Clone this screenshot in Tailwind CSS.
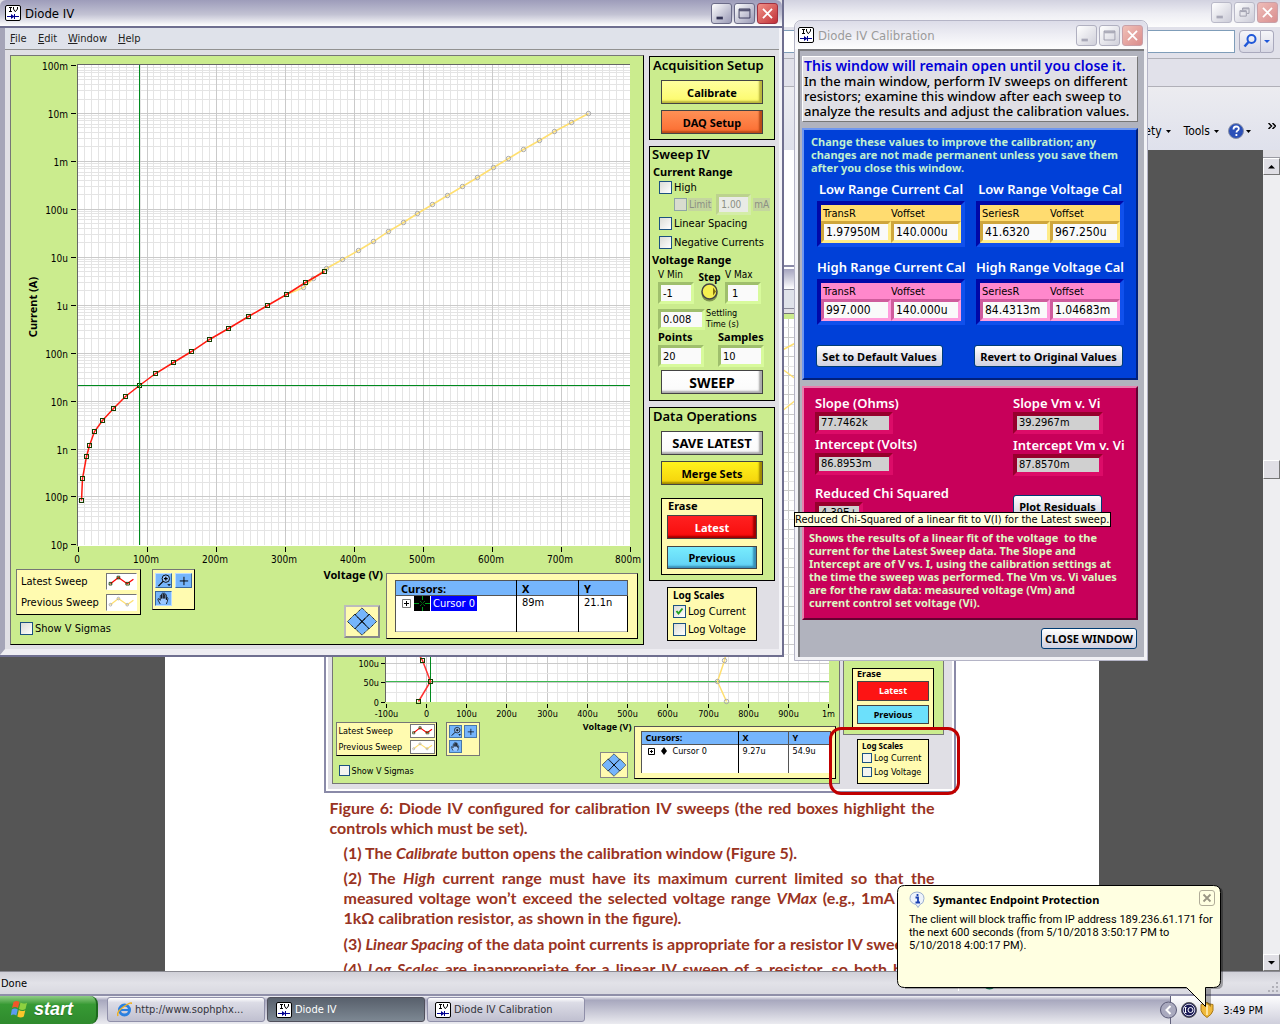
<!DOCTYPE html>
<html lang="en">
<head>
<meta charset="utf-8">
<title>Diode IV</title>
<script src="https://cdn.jsdelivr.net/npm/@tailwindcss/browser@4"></script>
</head>
<body class="relative flex h-screen flex-col overflow-hidden bg-[#555555] font-['DejaVu_Sans_Condensed','Roboto',sans-serif] text-[11px] leading-[13px] text-black">

<svg class="hidden" aria-hidden="true">
  <symbol id="iv" viewBox="0 0 16 16">
    <rect x=".5" y=".5" width="15" height="15" rx="1.5" fill="#fff" stroke="#000"/>
    <path d="M4 2.500h3M5.500 2.500v4M4 6.500h3M8.500 2v2l1.500 2.500h.5L12.500 4V2" fill="none" stroke="#000"/>
    <path d="M2 11.500h12M9.500 9v5" stroke="#000090" fill="none"/><path d="M6 9v5l3.500-2.500z" fill="#000090"/>
  </symbol>
  <symbol id="min" viewBox="0 0 21 21"><path d="M5 14h7v3H5z" fill="currentColor"/></symbol>
  <symbol id="max" viewBox="0 0 21 21"><path d="M4.500 5.500h12v10h-12zM4.500 6.500h12M5 7.500h11" fill="none" stroke="currentColor"/></symbol>
  <symbol id="restore" viewBox="0 0 21 21"><path d="M8.500 8V5.500h7v6H13M8 6.500h7M5.500 8.500h7v6h-7zM6 9.500h6" fill="none" stroke="currentColor"/></symbol>
  <symbol id="x" viewBox="0 0 21 21"><path d="M5.500 5.500l10 10M15.500 5.500l-10 10" fill="none" stroke="currentColor" stroke-width="2"/></symbol>
  <symbol id="zoom" viewBox="0 0 16 14"><circle cx="10.500" cy="5" r="4" fill="#9cc8ff" stroke="#000"/><path d="M8.500 5h4M10.500 3v4M7.500 8l-5 5" stroke="#000" stroke-width="1.300" fill="none"/><path d="M12 11h4l-2 2z"/></symbol>
  <symbol id="plus" viewBox="0 0 16 14"><path d="M4 7.500h9M8.500 3v9" stroke="#000" fill="none"/></symbol>
  <symbol id="hand" viewBox="0 0 16 14"><path d="M4.500 13L2 8.500q-.5-2 1.500-1l1 1.500V4q.8-1.500 1.500 0v3V2q1-1.500 1.700 0v5-5.500q1-1.200 1.700 0V7 3q1-1.200 1.700 0v5.500-2q1.400-1.500 1.600.5-.2 3-1.700 6" fill="#9cc8ff" stroke="#000" stroke-width=".8"/></symbol>
  <symbol id="pad" viewBox="0 0 36 33">
    <g fill="#75b5fc" stroke="#000" stroke-dasharray="1.500 .7"><path d="M10 8l8 8.500-8 8.500-8.500-8.500zM26 8l8.500 8.500-8.500 8.500-8-8.500zM18 1l8 8-8 7.500L10 9zM18 16.500l8 8-8 7.500-8-7.500z"/></g><path d="M15 13.500l6 6M21 13.500l-6 6" stroke="#000"/>
  </symbol>
  <symbol id="redline" viewBox="0 0 31 17"><path d="M3 11l9-7 10 7 7-5" fill="none" stroke="#f00" stroke-width="1.500"/><path d="M1.500 9.500h3v3h-3zM10.500 2.500h3v3h-3zM20.500 9.500h4v3h-4z" fill="none" stroke="#153d00"/></symbol>
  <symbol id="yelline" viewBox="0 0 31 17"><path d="M3 11l9-7 10 7 7-5" fill="none" stroke="#ffdf70" stroke-width="1.500"/><g fill="none" stroke="#aaa"><circle cx="3" cy="11" r="1.500"/><circle cx="12" cy="4" r="1.500"/><circle cx="22" cy="11" r="1.500"/></g></symbol>
</svg>

<!-- Web browser behind the instrument windows -->
<header class="h-[150px] shrink-0 bg-[#e1e1ea]">
  <div class="flex h-[27px] justify-end gap-[2px] bg-linear-to-b from-[#d2d2e0] via-[#ededf3] to-[#fdfdfd] px-[2px] pt-[2px]">
    <button aria-label="Minimize" class="h-[21px] w-[21px] rounded-[3px] border border-[#b9b9c8] bg-linear-to-br from-white to-[#ccccd8] text-[#a9a9b8]"><svg class="size-full"><use href="#min"/></svg></button>
    <button aria-label="Restore" class="h-[21px] w-[21px] rounded-[3px] border border-[#b9b9c8] bg-linear-to-br from-white to-[#ccccd8] text-[#9a9aaa]"><svg class="size-full"><use href="#restore"/></svg></button>
    <button aria-label="Close" class="h-[21px] w-[21px] rounded-[3px] border border-[#c9a0a8] bg-linear-to-br from-[#eebcb8] to-[#d98f90] text-white"><svg class="size-full"><use href="#x"/></svg></button>
  </div>
  <div class="flex h-[32px] items-start justify-end gap-[4px] border-b border-[#b0b0b8] pt-[3px] pr-[6px]">
    <input aria-label="Address" class="h-[23px] flex-1 border border-[#7f9db9] bg-white">
    <div class="flex h-[23px]">
      <button aria-label="Search" class="w-[22px] rounded-l-[4px] border border-[#a9a9bd] bg-linear-to-b from-[#f6f6fa] to-[#d8d8e4]"><svg class="size-full" viewBox="0 0 20 20"><circle cx="11.500" cy="7.500" r="4" fill="none" stroke="#2058d8" stroke-width="2"/><path d="M8.500 10.500L4.500 15" stroke="#2058d8" stroke-width="2.500"/></svg></button>
      <button aria-label="Search options" class="w-[13px] rounded-r-[4px] border border-l-0 border-[#a9a9bd] bg-linear-to-b from-[#f6f6fa] to-[#d8d8e4]"><svg class="size-full" viewBox="0 0 12 20"><path d="M3 8.500h6l-3 3z" fill="#2058d8"/></svg></button>
    </div>
  </div>
  <div class="h-[28px] border-b border-[#b0b0b8]"></div>
  <nav class="flex h-[63px] items-start justify-end bg-linear-to-b from-[#ececf0] to-[#dfe1ec] pt-[36px] text-[12px] leading-[17px]">
    <button class="flex items-center gap-[4px]">Safety<svg class="h-[3px] w-[5px]" viewBox="0 0 5 3"><path d="M0 0h5L2.500 3z"/></svg></button>
    <button class="ml-[13px] flex items-center gap-[4px]">Tools<svg class="h-[3px] w-[5px]" viewBox="0 0 5 3"><path d="M0 0h5L2.500 3z"/></svg></button>
    <button aria-label="Help" class="ml-[9px] flex items-center gap-[2px]"><svg class="size-[16px]" viewBox="0 0 16 16"><circle cx="8" cy="8" r="7.500" fill="#2b50b8" stroke="#8890a8"/><path d="M5.500 6.500q0-3 2.700-3t2.600 2.300q0 1.200-1.400 2-.9.500-.9 1.700M8.400 11v2" fill="none" stroke="#fff" stroke-width="1.800"/></svg><svg class="h-[3px] w-[5px]" viewBox="0 0 5 3"><path d="M0 0h5L2.500 3z"/></svg></button>
    <button class="mr-[4px] ml-[17px]" aria-label="More"><svg class="h-[6px] w-[8px]" viewBox="0 0 8 6"><path d="M.5 0l3 3-3 3M4.500 0l3 3-3 3" fill="none" stroke="#000" stroke-width="1.500"/></svg></button>
  </nav>
</header>

<div class="flex min-h-0 flex-1">
  <main class="min-w-0 flex-1 overflow-hidden">
    <article class="mx-auto h-full w-[934px] bg-white pt-[115px] pl-[159px]">
      <figure class="relative h-[528px] w-[632px] border-2 border-[#8a8aa8]">
        <div class="flex h-full flex-col border-2 border-white">
          <div class="h-[20px] bg-linear-to-b from-[#a5a4bf] to-white"></div>
          <div class="h-[20px] border-y border-[#8a8a9a] bg-[#dfe2ea]"></div>
          <div class="flex min-h-0 flex-1 bg-[#e0dfe5] pt-[4px] pb-[5px] pl-[4px]">
            <div class="flex w-[508px] flex-col border border-[#767676] bg-[#cbec8e]">
              <svg id="miniplot" class="h-[408px] w-full shrink-0" viewBox="332 315 506 408"></svg>
              <div class="flex min-h-0 flex-1 gap-[9px] pl-[3px] text-[9px] leading-[10px]">
                <div>
                  <div class="flex h-[34px] w-[101px] flex-col justify-between border border-r-black border-b-black border-[#767676] bg-[#fffbb0] p-[1px] pl-[2px]">
                    <div class="flex items-center justify-between">Latest Sweep<svg class="h-[14px] w-[25px] border border-[#767676] bg-white"><use href="#redline"/></svg></div>
                    <div class="flex items-center justify-between">Previous Sweep<svg class="h-[14px] w-[25px] border border-[#767676] bg-white"><use href="#yelline"/></svg></div>
                  </div>
                  <label class="mt-[9px] ml-[3px] flex items-center gap-[2px]"><input type="checkbox" class="size-[11px] appearance-none border border-[#1c5180] bg-[#f4f4f0]">Show V Sigmas</label>
                </div>
                <div class="grid h-[34px] w-[34px] grid-cols-2 content-start gap-[2px] border border-[#767676] bg-[#fffbb0] p-[2px]">
                  <button aria-label="Zoom" class="h-[13px] border border-[#4878a8] bg-[#75b5fc]"><svg class="size-full"><use href="#zoom"/></svg></button>
                  <button aria-label="Move cursor" class="h-[13px] border border-[#4878a8] bg-[#75b5fc]"><svg class="size-full"><use href="#plus"/></svg></button>
                  <button aria-label="Pan" class="h-[13px] border border-[#4878a8] bg-[#75b5fc]"><svg class="size-full"><use href="#hand"/></svg></button>
                </div>
                <div class="-mr-[3px] flex flex-1 flex-col items-end">
                  <b class="-mr-[4px] font-['Noto_Sans',sans-serif]">Voltage (V)</b>
                  <button aria-label="Move cursor by point" class="mt-[20px] h-[26px] w-[28px] border border-[#888] bg-[#fffbb0]"><svg class="size-full"><use href="#pad"/></svg></button>
                </div>
                <div class="relative mt-[4px] mr-[3px] h-[53px] w-[202px] border border-r-black border-b-black border-[#555] bg-[#fffbb0] p-[4px] pl-[6px]">
                  <table class="h-[42px] w-full border-collapse bg-white">
                    <thead><tr class="h-[13px] border border-[#555] bg-[#75b5fc] text-left font-['Noto_Sans',sans-serif]"><th class="w-[97px] border-r border-black p-0 pl-[4px]">Cursors:</th><th class="w-[50px] border-r border-[#555] p-0 pl-[4px]">X</th><th class="p-0 pl-[4px]">Y</th></tr></thead>
                    <tbody><tr class="border-x border-[#555] align-top"><td class="border-r border-black p-0 pt-px pl-[6px]"><span class="flex items-center gap-[6px]"><svg class="size-[7px]" viewBox="0 0 7 7"><path d="M.5.5h6v6h-6zM2 3.500h3M3.500 2v3" fill="none" stroke="#000"/></svg><svg class="h-[8px] w-[6px]" viewBox="0 0 6 8"><path d="M3 0l3 4-3 4-3-4z"/></svg>Cursor 0</span></td><td class="border-r border-[#555] p-0 pt-px pl-[4px]">9.27u</td><td class="p-0 pt-px pl-[4px]">54.9u</td></tr></tbody>
                  </table>
                </div>
              </div>
            </div>
            <div class="ml-[3px] flex w-[101px] flex-col items-center font-['Noto_Sans',sans-serif] text-[9px] leading-[10px]">
              <div class="flex w-full min-h-0 flex-1 flex-col items-center justify-end border border-[#767676] bg-[#cbec8e] pb-[4px]">
                <div class="h-[62px] w-[82px] border border-black bg-[#fffbb0] px-[4px]">
                  <b>Erase</b>
                  <button class="mt-[2px] h-[20px] w-full border border-[#444] bg-[#fd1414] font-bold text-white">Latest</button>
                  <button class="mt-[4px] h-[19px] w-full border border-[#444] bg-[#6ce0fb] font-bold">Previous</button>
                </div>
              </div>
              <div class="mt-[4px] h-[45px] w-[72px] border border-black bg-[#fffbb0] pt-px pl-[4px] font-['DejaVu_Sans_Condensed','Roboto',sans-serif]">
                <b class="font-['Noto_Sans',sans-serif] text-[8px]">Log Scales</b>
                <label class="mt-[2px] flex items-center gap-[2px]"><input type="checkbox" class="size-[10px] appearance-none border border-[#1c5180] bg-[#f4f4f0]">Log Current</label>
                <label class="mt-[4px] flex items-center gap-[2px]"><input type="checkbox" class="size-[10px] appearance-none border border-[#1c5180] bg-[#f4f4f0]">Log Voltage</label>
              </div>
            </div>
          </div>
        </div>
        <div class="absolute -right-[6px] -bottom-[4px] h-[68px] w-[131px] rounded-[12px] border-[3px] border-[#c00000]"></div>
      </figure>
      <div class="ml-[6px] w-[605px] font-['Lato',sans-serif] text-[16px] leading-[20px] font-bold whitespace-nowrap text-[#993322]">
        <figcaption class="mt-[5px]"><div class="[text-align-last:justify]">Figure 6: Diode IV configured for calibration IV sweeps (the red boxes highlight the</div>controls which must be set).</figcaption>
        <p class="mt-[5px] ml-[14px]">(1) The <i>Calibrate</i> button opens the calibration window (Figure 5).</p>
        <p class="mt-[5px] ml-[14px]"><span class="block [text-align-last:justify]">(2) The <i>High</i> current range must have its maximum current limited so that the</span><span class="block [text-align-last:justify]">measured voltage won’t exceed the selected voltage range <i>VMax</i> (e.g., 1mA for a</span>1kΩ calibration resistor, as shown in the figure).</p>
        <p class="mt-[6px] ml-[14px]">(3) <i>Linear Spacing</i> of the data point currents is appropriate for a resistor IV sweep.</p>
        <p class="mt-[5px] ml-[14px] [text-align-last:justify]">(4) <i>Log Scales</i> are inappropriate for a linear IV sweep of a resistor, so both boxes</p>
      </div>
    </article>
  </main>
  <div class="flex w-[17px] flex-col bg-[#eeeef1]">
    <div class="h-[8px] border-b border-[#9a9aa2] bg-[#e0dfe5]"></div>
    <button aria-label="Scroll up" class="h-[17px] border border-t-white border-r-[#777] border-b-[#777] border-l-white bg-[#e0dfe5]"><svg class="size-full" viewBox="0 0 15 15"><path d="M4 9.500h7L7.500 6z"/></svg></button>
    <div class="flex-1 pt-[285px]"><div class="h-[19px] border border-t-white border-r-[#777] border-b-[#777] border-l-white bg-[#e0dfe5]"></div></div>
    <button aria-label="Scroll down" class="h-[17px] border border-t-white border-r-[#777] border-b-[#777] border-l-white bg-[#e0dfe5]"><svg class="size-full" viewBox="0 0 15 15"><path d="M4 6h7L7.500 9.500z"/></svg></button>
  </div>
</div>

<footer class="flex h-[23px] shrink-0 items-center border-t border-[#8a8a92] bg-linear-to-b from-[#d0d0d8] via-[#e2e2e8] to-[#d8d8e0] pl-[1px]"><span>Done</span>
  <span class="ml-auto flex gap-[23px] pr-[270px]"><i class="h-[16px] w-px bg-white"></i><svg class="size-[15px]" viewBox="0 0 15 15"><circle cx="7.500" cy="7.500" r="7" fill="#1b7a5a"/></svg></span>
  <svg class="size-[13px] self-end" viewBox="0 0 13 13"><path d="M9 1h2v2H9zM9 5h2v2H9zM9 9h2v2H9zM5 5h2v2H5zM5 9h2v2H5zM1 9h2v2H1z" fill="#b0b0b8"/></svg>
</footer>

<div class="flex h-[30px] shrink-0 border-t-2 border-[#8f8fa9] bg-linear-to-b from-[#f4f4f8] via-[#a8a8be] via-15% to-[#ebebf0]">
  <button class="flex w-[98px] items-center gap-[4px] rounded-r-[8px] border-r-2 border-[#1d6a1d] bg-linear-to-b from-[#8fce85] via-[#379a34] via-30% to-[#2f8a2d] pb-[2px] pl-[10px] font-['Liberation_Sans',sans-serif] text-[18px] leading-[20px] font-bold text-white italic text-shadow-xs">
    <svg class="h-[18px] w-[20px]" viewBox="0 0 19 18"><path d="M3 2q3-2 6 0L7.500 8q-3-2-6 0z" fill="#f1562a"/><path d="M10 2.500q3 2 6.500.2L15 9q-3 2-6.500 0z" fill="#8ed040"/><path d="M1.300 9.500q3-2 6 0L5.800 15.500q-3-2-5.500 0z" fill="#5b9cf0"/><path d="M8.300 10q3 2 6.500.2L13.300 16.500q-3 2-6.500 0z" fill="#fbc62c"/></svg>start</button>
  <div class="flex flex-1 gap-[2px] pt-px pl-[9px] text-[#33333b]">
    <button class="flex h-[25px] w-[158px] items-center gap-[3px] rounded-[3px] border border-[#8f8fa9] bg-linear-to-b from-white via-[#dcdce6] via-20% to-[#c0c0d0] pl-[9px]">
      <svg class="size-[15px]" viewBox="0 0 15 15"><circle cx="7.500" cy="8" r="5" fill="none" stroke="#2a80e0" stroke-width="3"/><path d="M4 8h9" stroke="#2a80e0" stroke-width="2"/><path d="M1 14Q-1 10 7 4.500T14.500 2" fill="none" stroke="#f0b020" stroke-width="1.500"/></svg>http://www.sophphx...</button>
    <button class="flex h-[25px] w-[158px] items-center gap-[3px] rounded-[3px] border border-[#50505c] bg-linear-to-b from-[#58606c] to-[#7d8893] pl-[8px] text-white"><svg class="size-[16px]"><use href="#iv"/></svg>Diode IV</button>
    <button class="flex h-[25px] w-[158px] items-center gap-[3px] rounded-[3px] border border-[#8f8fa9] bg-linear-to-b from-white via-[#dcdce6] via-20% to-[#c0c0d0] pl-[7px]"><svg class="size-[16px]"><use href="#iv"/></svg>Diode IV Calibration</button>
  </div>
  <div class="flex w-[110px] items-center border-l border-[#62627c] bg-linear-to-b from-[#fdfdfe] to-[#cfcfdc]">
    <svg class="-ml-[12px] h-[22px] w-[40px] shrink-0" viewBox="0 0 40 22"><circle cx="9.500" cy="11" r="8" fill="#a9a9be" stroke="#5c5c78"/><path d="M11.500 7L7.500 11l4 4" fill="none" stroke="#fff" stroke-width="2"/><circle cx="30" cy="11" r="7.500" fill="#1a1a58" stroke="#555"/><circle cx="30" cy="11" r="5.800" fill="none" stroke="#fff" stroke-width=".8"/><path d="M26.500 8.500v5M25.500 8.500h2M25.500 13.500h2" stroke="#fff" fill="none"/><circle cx="31.500" cy="11" r="2.500" fill="none" stroke="#fff"/></svg>
    <svg class="ml-px h-[16px] w-[14px] shrink-0" viewBox="0 0 14 16"><path d="M1 2.500Q4.500 2.500 7 .5q2.500 2 6 2v6q-1 4-6 7-5-3-6-7z" fill="#f0b93a" stroke="#a87818"/><path d="M7 3v10" stroke="#fff2c0" stroke-width="1.500"/></svg>
    <time class="ml-auto pr-[17px]">3:49 PM</time>
  </div>
</div>

<!-- Diode IV main window -->
<section aria-label="Diode IV" class="absolute top-0 left-0 flex h-[657px] w-[784px] flex-col border-r-2 border-b-2 border-[#6f6f90] bg-[#e0dfe5]">
  <div class="flex h-[28px] shrink-0 items-center rounded-t-[6px] border-b-2 border-[#6e6e8f] bg-linear-to-b from-[#9d9cba] via-[#c2c2d3] via-55% to-[#ffffff] pr-[4px] pl-[5px]">
    <svg class="size-[16px]"><use href="#iv"/></svg><h1 class="ml-[4px] text-[13px]">Diode IV</h1>
    <div class="ml-auto flex gap-[2px]">
      <button aria-label="Minimize" class="size-[21px] rounded-[3px] border border-[#6b6b88] bg-linear-to-br from-white to-[#9999b5] text-[#333355]"><svg class="size-full"><use href="#min"/></svg></button>
      <button aria-label="Maximize" class="size-[21px] rounded-[3px] border border-[#6b6b88] bg-linear-to-br from-white to-[#9999b5] text-[#333355]"><svg class="size-full"><use href="#max"/></svg></button>
      <button aria-label="Close" class="size-[21px] rounded-[3px] border border-[#a03040] bg-linear-to-br from-[#f09088] to-[#c02c38] text-white"><svg class="size-full"><use href="#x"/></svg></button>
    </div>
  </div>
  <div class="flex min-h-0 flex-1 flex-col border-r-[3px] border-b-[6px] border-l-[5px] border-r-[#f4f4f8] border-b-[#eeedf2] border-l-[#a5a5b8]">
    <nav class="flex h-[22px] shrink-0 items-center gap-[12px] border-b border-[#919191] bg-[#dfe2ea] pl-[5px] text-[#222]">
      <a href="#file" class="w-[16px]"><u>F</u>ile</a><a href="#edit" class="w-[18px]"><u>E</u>dit</a><a href="#window" class="w-[38px]"><u>W</u>indow</a><a href="#help"><u>H</u>elp</a>
    </nav>
    <div class="flex min-h-0 flex-1 gap-[5px] pt-[5px] pl-[5px]">
      <div class="flex h-[590px] w-[634px] flex-col border border-t-[#767676] border-r-black border-b-black border-l-[#767676] bg-[#cbec8e]">
        <svg id="plot" class="h-[512px] w-full shrink-0" viewBox="11 56 632 512"></svg>
        <div class="flex min-h-0 flex-1 pl-[5px]">
          <div>
            <div class="mt-px flex h-[46px] w-[125px] flex-col justify-between border border-r-black border-b-black border-[#767676] bg-[#fffbb0] p-[3px] pl-[4px]">
              <div class="flex items-center justify-between">Latest Sweep<svg class="h-[17px] w-[31px] border border-t-[#767676] border-l-[#767676] border-white bg-white"><use href="#redline"/></svg></div>
              <div class="flex items-center justify-between">Previous Sweep<svg class="h-[17px] w-[31px] border border-t-[#767676] border-l-[#767676] border-white bg-white"><use href="#yelline"/></svg></div>
            </div>
            <label class="mt-[7px] ml-[4px] flex items-center gap-[2px]"><input type="checkbox" class="size-[13px] appearance-none border border-[#1c5180] bg-linear-to-br from-[#dcdcd7] to-white">Show V Sigmas</label>
          </div>
          <div class="mt-px ml-[11px] grid h-[41px] w-[43px] grid-cols-2 content-start gap-[3px] border border-r-black border-b-black border-[#767676] bg-[#fffbb0] p-[2px] pt-[3px]">
            <button aria-label="Zoom" class="h-[15px] border border-t-[#bcdcff] border-r-[#38689c] border-b-[#38689c] border-l-[#bcdcff] bg-[#75b5fc]"><svg class="size-full"><use href="#zoom"/></svg></button>
            <button aria-label="Move cursor" class="h-[15px] border border-t-[#bcdcff] border-r-[#38689c] border-b-[#38689c] border-l-[#bcdcff] bg-[#75b5fc]"><svg class="size-full"><use href="#plus"/></svg></button>
            <button aria-label="Pan" class="h-[15px] border border-t-[#38689c] border-r-[#bcdcff] border-b-[#bcdcff] border-l-[#38689c] bg-[#75b5fc]"><svg class="size-full"><use href="#hand"/></svg></button>
          </div>
          <div class="mr-[3px] flex flex-1 flex-col items-end">
            <b class="font-['Noto_Sans',sans-serif]">Voltage (V)</b>
            <button aria-label="Move cursor by point" class="mt-[24px] mr-[3px] h-[33px] w-[36px] border-2 border-t-[#bbb] border-r-[#888] border-b-[#888] border-l-[#bbb] bg-[#fffbb0]"><svg class="size-full"><use href="#pad"/></svg></button>
          </div>
          <div class="mt-[5px] mr-[5px] h-[66px] w-[252px] border border-r-black border-b-black border-[#767676] bg-[#fffbb0] pt-[6px] pr-[9px] pl-[8px]">
            <table class="h-[52px] w-full border-collapse border-b border-[#bbb] bg-white">
              <thead><tr class="h-[15px] border border-[#555] bg-[#75b5fc] text-left font-['Noto_Sans',sans-serif]"><th class="w-[121px] border-r border-black p-0 pl-[5px]">Cursors:</th><th class="w-[62px] border-r border-black p-0 pl-[5px]">X</th><th class="p-0 pl-[5px]">Y</th></tr></thead>
              <tbody><tr class="border-r border-l border-r-black border-l-[#555] align-top"><td class="border-r border-black p-0 pl-[6px]"><span class="flex h-[15px] items-center"><svg class="size-[9px]" viewBox="0 0 9 9"><path d="M.5.5h8v8h-8z" fill="#fff" stroke="#777"/><path d="M2 4.500h5M4.500 2v5" stroke="#000"/></svg><svg class="ml-[3px] h-[15px] w-[16px] bg-black" viewBox="0 0 16 15"><path d="M0 7.500h5M11 7.500h5M8.500 0v4M8.500 11v4" stroke="#00a01e"/><path d="M6 5l5 5M11 5l-5 5" stroke="#00a01e" stroke-dasharray="1 1"/></svg><span class="ml-[1px] bg-[#0000ff] px-[2px] leading-[15px] text-white">Cursor 0</span></span></td><td class="border-r border-black p-0 pl-[5px]">89m</td><td class="p-0 pl-[5px]">21.1n</td></tr></tbody>
            </table>
          </div>
        </div>
      </div>

      <div class="flex w-[126px] flex-col items-center gap-[6px] pt-px">
        <div class="flex h-[84px] w-full flex-col items-center border border-black bg-[#cbec8e]">
          <h2 class="h-[23px] w-full pt-[2px] pl-[3px] font-['Noto_Sans',sans-serif] text-[13px] font-semibold whitespace-nowrap">Acquisition Setup</h2>
          <button class="h-[24px] w-[102px] border border-[#444] bg-linear-to-b from-[#ffff9c] to-[#fcfa68] font-['Noto_Sans',sans-serif] font-bold inset-shadow-[-3px_-2px_2px_#b9b53c]">Calibrate</button>
          <button class="mt-[6px] h-[24px] w-[102px] border border-[#444] bg-linear-to-b from-[#ff9055] to-[#fb6c30] font-['Noto_Sans',sans-serif] font-bold inset-shadow-[-3px_-2px_2px_#b94a18]">DAQ Setup</button>
        </div>
        <div class="flex h-[255px] w-full flex-col border border-black bg-[#cbec8e]">
          <h2 class="h-[17px] pt-[1px] pl-[2px] font-['Noto_Sans',sans-serif] text-[13px] font-semibold">Sweep IV</h2>
          <h3 class="h-[16px] pt-[1px] pl-[3px] font-['Noto_Sans',sans-serif] font-bold">Current Range</h3>
          <label class="flex h-[14px] items-center gap-[2px] pl-[9px]"><input type="checkbox" class="size-[13px] appearance-none border border-[#1c5180] bg-linear-to-br from-[#dcdcd7] to-white">High</label>
          <div class="flex h-[21px] items-center pl-[24px] text-[10px] text-[#8b8f84]">
            <label class="flex items-center gap-[1px]"><input type="checkbox" disabled class="size-[13px] appearance-none border border-[#8fa5a5] bg-[#d9dccf]"><span class="bg-[#c4d69f] px-px">Limit</span></label>
            <input disabled aria-label="Current limit" value="1.00" class="ml-[4px] h-[21px] w-[35px] border-[3px] border-t-[#bcd28e] border-r-[#d4eda8] border-b-[#d4eda8] border-l-[#bcd28e] bg-[#e9ebe6] pl-[2px]"><span class="ml-[2px] bg-[#c4d69f] px-px">mA</span>
          </div>
          <label class="flex h-[17px] items-center gap-[2px] pl-[9px]"><input type="checkbox" class="size-[13px] appearance-none border border-[#1c5180] bg-linear-to-br from-[#dcdcd7] to-white">Linear Spacing</label>
          <label class="flex h-[20px] items-center gap-[2px] pl-[9px]"><input type="checkbox" class="size-[13px] appearance-none border border-[#1c5180] bg-linear-to-br from-[#dcdcd7] to-white">Negative Currents</label>
          <h3 class="h-[16px] pt-[1px] pl-[2px] font-['Noto_Sans',sans-serif] font-bold">Voltage Range</h3>
          <div class="flex h-[36px] pl-[8px] text-[10px]">
            <label class="w-[36px]">V Min<input value="-1" class="mt-px block h-[22px] w-full border-[3px] border-t-[#9fbf6c] border-r-[#d8fa9c] border-b-[#d8fa9c] border-l-[#9fbf6c] bg-[#fafafa] pl-[2px] text-[11px]"></label>
            <button class="flex w-[31px] flex-col items-center pt-[3px] font-['Noto_Sans',sans-serif] leading-[12px] font-bold">Step<svg class="size-[19px]" viewBox="0 0 19 19"><circle cx="9.500" cy="10.500" r="8" fill="#7f9650"/><circle cx="9.500" cy="8.500" r="7.500" fill="#f6f050" stroke="#444" stroke-width="1.500"/><path d="M13 4.500v8l3-4z" fill="#807010"/></svg></button>
            <label class="w-[36px] whitespace-nowrap">V Max<input value="1" class="mt-px block h-[22px] w-full border-[3px] border-t-[#9fbf6c] border-r-[#d8fa9c] border-b-[#d8fa9c] border-l-[#9fbf6c] bg-[#fafafa] pl-[4px] text-[11px]"></label>
          </div>
          <label class="flex h-[26px] items-end gap-[1px] pl-[8px] text-[9px] leading-[11px]"><input value="0.008" class="h-[21px] w-[47px] border-[3px] border-t-[#9fbf6c] border-r-[#d8fa9c] border-b-[#d8fa9c] border-l-[#9fbf6c] bg-[#fafafa] pl-[2px] text-[11px]"><span>Settling<br>Time (s)</span></label>
          <div class="mr-[2px] flex justify-between pl-[8px] font-['Noto_Sans',sans-serif]">
            <label class="w-[46px] font-bold">Points<input value="20" class="mt-[2px] block h-[22px] w-full border-[3px] border-t-[#9fbf6c] border-r-[#d8fa9c] border-b-[#d8fa9c] border-l-[#9fbf6c] bg-[#fafafa] pl-[2px] font-['DejaVu_Sans_Condensed','Roboto',sans-serif] font-normal"></label>
            <label class="w-[54px] font-bold">Samples<input value="10" class="mt-[2px] block h-[22px] w-[46px] border-[3px] border-t-[#9fbf6c] border-r-[#d8fa9c] border-b-[#d8fa9c] border-l-[#9fbf6c] bg-[#fafafa] pl-[2px] font-['DejaVu_Sans_Condensed','Roboto',sans-serif] font-normal"></label>
          </div>
          <button class="mt-[3px] h-[24px] w-[102px] self-center border border-[#444] bg-linear-to-b from-white to-[#fafafa] font-['Noto_Sans',sans-serif] text-[14px] font-bold inset-shadow-[-3px_-2px_2px_#aaaaaa]">SWEEP</button>
        </div>
        <div class="flex h-[174px] w-full flex-col items-center border border-black bg-[#cbec8e]">
          <h2 class="h-[23px] w-full pt-[2px] pl-[3px] font-['Noto_Sans',sans-serif] text-[13px] font-semibold">Data Operations</h2>
          <button class="h-[24px] w-[102px] border border-[#444] bg-linear-to-b from-white to-[#fafafa] font-['Noto_Sans',sans-serif] text-[13px] font-bold inset-shadow-[-3px_-2px_2px_#aaaaaa]">SAVE LATEST</button>
          <button class="mt-[6px] h-[24px] w-[102px] border border-[#444] bg-linear-to-b from-[#fff21c] to-[#f4d20a] font-['Noto_Sans',sans-serif] font-bold inset-shadow-[-3px_-2px_2px_#a08a00]">Merge Sets</button>
          <div class="mt-[13px] h-[77px] w-[102px] border border-black bg-[#fffbb0] px-[5px] font-['Noto_Sans',sans-serif] font-bold">
            <h3 class="h-[16px] pl-[1px]">Erase</h3>
            <button class="block h-[24px] w-full border border-[#444] bg-linear-to-b from-[#ff2020] to-[#f80808] text-white inset-shadow-[-3px_-2px_2px_#a00000]">Latest</button>
            <button class="mt-[7px] block h-[23px] w-full border border-[#444] bg-linear-to-b from-[#78ecfd] to-[#60d0f4] inset-shadow-[-3px_-2px_2px_#3890b8]">Previous</button>
          </div>
        </div>
        <div class="h-[54px] w-[90px] border border-black bg-[#fffbb0] pl-[5px]">
          <h3 class="h-[16px] pt-px font-['Noto_Sans',sans-serif] text-[10px] font-bold">Log Scales</h3>
          <label class="flex h-[15px] items-center gap-[2px]"><span class="grid size-[13px]"><input type="checkbox" checked class="col-start-1 row-start-1 size-[13px] appearance-none border border-[#1c5180] bg-linear-to-br from-[#dcdcd7] to-white"><svg class="pointer-events-none col-start-1 row-start-1" viewBox="0 0 13 13"><path d="M3.500 6l2 2.500 4-5" fill="none" stroke="#21a121" stroke-width="2"/></svg></span>Log Current</label>
          <label class="mt-[2px] flex h-[17px] items-center gap-[2px]"><input type="checkbox" class="size-[13px] appearance-none border border-[#1c5180] bg-linear-to-br from-[#dcdcd7] to-white">Log Voltage</label>
        </div>
      </div>
    </div>
  </div>
</section>

<!-- Calibration window -->
<section aria-label="Diode IV Calibration" class="absolute top-[20px] left-[794px] flex h-[641px] w-[354px] flex-col rounded-t-[7px] border border-[#b4b4c6] bg-[#f2f2f6]">
  <div class="flex h-[28px] shrink-0 items-center rounded-t-[7px] bg-linear-to-b from-[#dcdce8] via-[#eeeef4] to-[#fdfdfd] pr-[4px] pl-[3px]">
    <svg class="size-[16px]"><use href="#iv"/></svg><h1 class="ml-[4px] text-[13px] text-[#9b9b9b]">Diode IV Calibration</h1>
    <div class="ml-auto flex gap-[2px]">
      <button aria-label="Minimize" class="size-[21px] rounded-[3px] border border-[#b0b0c0] bg-linear-to-br from-white to-[#d0d0da] text-[#a9a9b8]"><svg class="size-full"><use href="#min"/></svg></button>
      <button aria-label="Maximize" class="size-[21px] rounded-[3px] border border-[#b0b0c0] bg-linear-to-br from-white to-[#d0d0da] text-[#9a9aaa]"><svg class="size-full"><use href="#max"/></svg></button>
      <button aria-label="Close" class="size-[21px] rounded-[3px] border border-[#c9a0a8] bg-linear-to-br from-[#f0c0b8] to-[#da8c8c] text-white"><svg class="size-full"><use href="#x"/></svg></button>
    </div>
  </div>
  <div class="mx-[3px] mb-[3px] flex min-h-0 flex-1 flex-col border-t-2 border-l-2 border-[#7c7c80] bg-[#b1b3be] px-[2px] pt-[5px] font-['Noto_Sans',sans-serif] font-bold">
    <div class="h-[66px] w-[336px] border border-t-white border-r-[#777] border-b-[#777] border-l-white bg-[#e0dfe5] pt-[1px] pl-[1px] text-[13px] leading-[15px] font-medium whitespace-nowrap">
      <h2 class="text-[14px] leading-[16px] font-semibold text-[#0000d8]">This window will remain open until you close it.</h2>
      <p>In the main window, perform IV sweeps on different<br>resistors; examine this window after each sweep to<br>analyze the results and adjust the calibration values.</p>
    </div>
    <div class="mt-[6px] h-[252px] w-[336px] border-2 border-t-[#6f97f0] border-r-[#00207c] border-b-[#00207c] border-l-[#6f97f0] bg-[#0040d8] pt-[5px] pl-[7px] text-white">
      <p class="whitespace-nowrap text-[#c0f0d0]">Change these values to improve the calibration; any<br>changes are not made permanent unless you save them<br>after you close this window.</p>
      <div class="mt-[9px] ml-[6px] grid w-[307px] grid-cols-2 gap-x-[11px] gap-y-[14px] text-center">
        <section><h3 class="h-[18px] text-[13px] font-semibold whitespace-nowrap">Low Range Current Cal</h3>
          <div class="grid h-[46px] grid-cols-2 border-4 border-t-[#0008a8] border-r-[#1050ec] border-b-[#1050ec] border-l-[#0008a8] bg-[#ffdc70] text-left font-['DejaVu_Sans_Condensed','Roboto',sans-serif] font-normal text-black">
            <label class="pt-[2px]"><span class="pl-[2px]">TransR</span><input value="1.97950M" class="mt-[1px] block h-[22px] w-full border-[3px] border-t-[#cfa63c] border-r-[#ffec88] border-b-[#ffec88] border-l-[#cfa63c] bg-[#fafafa] pl-[2px] text-[12px]"></label>
            <label class="pt-[2px]">Voffset<input value="140.000u" class="mt-[1px] block h-[22px] w-full border-[3px] border-t-[#cfa63c] border-r-[#ffec88] border-b-[#ffec88] border-l-[#cfa63c] bg-[#fafafa] pl-[2px] text-[12px]"></label>
          </div></section>
        <section><h3 class="h-[18px] text-[13px] font-semibold whitespace-nowrap">Low Range Voltage Cal</h3>
          <div class="grid h-[46px] grid-cols-2 border-4 border-t-[#0008a8] border-r-[#1050ec] border-b-[#1050ec] border-l-[#0008a8] bg-[#ffdc70] text-left font-['DejaVu_Sans_Condensed','Roboto',sans-serif] font-normal text-black">
            <label class="pt-[2px]"><span class="pl-[2px]">SeriesR</span><input value="41.6320" class="mt-[1px] block h-[22px] w-full border-[3px] border-t-[#cfa63c] border-r-[#ffec88] border-b-[#ffec88] border-l-[#cfa63c] bg-[#fafafa] pl-[2px] text-[12px]"></label>
            <label class="pt-[2px]">Voffset<input value="967.250u" class="mt-[1px] block h-[22px] w-full border-[3px] border-t-[#cfa63c] border-r-[#ffec88] border-b-[#ffec88] border-l-[#cfa63c] bg-[#fafafa] pl-[2px] text-[12px]"></label>
          </div></section>
        <section><h3 class="h-[18px] text-[13px] font-semibold whitespace-nowrap">High Range Current Cal</h3>
          <div class="grid h-[46px] grid-cols-2 border-4 border-t-[#0008a8] border-r-[#1050ec] border-b-[#1050ec] border-l-[#0008a8] bg-[#ff88cc] text-left font-['DejaVu_Sans_Condensed','Roboto',sans-serif] font-normal text-black">
            <label class="pt-[2px]"><span class="pl-[2px]">TransR</span><input value="997.000" class="mt-[1px] block h-[22px] w-full border-[3px] border-t-[#cf5c9c] border-r-[#ff9cdc] border-b-[#ff9cdc] border-l-[#cf5c9c] bg-[#fafafa] pl-[2px] text-[12px]"></label>
            <label class="pt-[2px]">Voffset<input value="140.000u" class="mt-[1px] block h-[22px] w-full border-[3px] border-t-[#cf5c9c] border-r-[#ff9cdc] border-b-[#ff9cdc] border-l-[#cf5c9c] bg-[#fafafa] pl-[2px] text-[12px]"></label>
          </div></section>
        <section><h3 class="h-[18px] text-[13px] font-semibold whitespace-nowrap">High Range Voltage Cal</h3>
          <div class="grid h-[46px] grid-cols-2 border-4 border-t-[#0008a8] border-r-[#1050ec] border-b-[#1050ec] border-l-[#0008a8] bg-[#ff88cc] text-left font-['DejaVu_Sans_Condensed','Roboto',sans-serif] font-normal text-black">
            <label class="pt-[2px]"><span class="pl-[2px]">SeriesR</span><input value="84.4313m" class="mt-[1px] block h-[22px] w-full border-[3px] border-t-[#cf5c9c] border-r-[#ff9cdc] border-b-[#ff9cdc] border-l-[#cf5c9c] bg-[#fafafa] pl-[2px] text-[12px]"></label>
            <label class="pt-[2px]">Voffset<input value="1.04683m" class="mt-[1px] block h-[22px] w-full border-[3px] border-t-[#cf5c9c] border-r-[#ff9cdc] border-b-[#ff9cdc] border-l-[#cf5c9c] bg-[#fafafa] pl-[2px] text-[12px]"></label>
          </div></section>
      </div>
      <div class="mt-[20px] ml-[5px] flex w-[307px] justify-between text-black">
        <button class="h-[22px] w-[127px] rounded-[3px] border border-[#003c74] bg-linear-to-b from-white to-[#d0d0e0] whitespace-nowrap">Set to Default Values</button>
        <button class="h-[22px] w-[149px] rounded-[3px] border border-[#003c74] bg-linear-to-b from-white to-[#d0d0e0] whitespace-nowrap">Revert to Original Values</button>
      </div>
    </div>
    <div class="mt-[6px] h-[234px] w-[336px] border-2 border-t-[#e87fae] border-r-[#640030] border-b-[#640030] border-l-[#e87fae] bg-[#c8005a] pt-[9px] text-white">
      <div class="grid h-[132px] grid-cols-[198px_1fr] pl-[11px] text-[13px] font-semibold">
        <div>
          <label class="block h-[41px]">Slope (Ohms)<output class="mt-[2px] block h-[22px] w-[78px] border-4 border-t-[#96002c] border-r-[#dc0c68] border-b-[#dc0c68] border-l-[#96002c] bg-[#d0d0d0] pl-[2px] font-['DejaVu_Sans_Condensed','Roboto',sans-serif] text-[11px] font-normal text-black">77.7462k</output></label>
          <label class="block h-[49px]">Intercept (Volts)<output class="mt-[2px] block h-[22px] w-[78px] border-4 border-t-[#96002c] border-r-[#dc0c68] border-b-[#dc0c68] border-l-[#96002c] bg-[#d0d0d0] pl-[2px] font-['DejaVu_Sans_Condensed','Roboto',sans-serif] text-[11px] font-normal text-black">86.8953m</output></label>
          <label class="block">Reduced Chi Squared<output class="mt-[2px] block h-[22px] w-[48px] border-4 border-t-[#96002c] border-r-[#dc0c68] border-b-[#dc0c68] border-l-[#96002c] bg-[#d0d0d0] pl-[2px] font-['DejaVu_Sans_Condensed','Roboto',sans-serif] text-[11px] font-normal text-black">4.39E+</output></label>
        </div>
        <div>
          <label class="block h-[42px]">Slope Vm v. Vi<output class="mt-[2px] block h-[22px] w-[90px] border-4 border-t-[#96002c] border-r-[#dc0c68] border-b-[#dc0c68] border-l-[#96002c] bg-[#d0d0d0] pl-[2px] font-['DejaVu_Sans_Condensed','Roboto',sans-serif] text-[11px] font-normal text-black">39.2967m</output></label>
          <label class="block h-[56px] whitespace-nowrap">Intercept Vm v. Vi<output class="mt-[2px] block h-[22px] w-[90px] border-4 border-t-[#96002c] border-r-[#dc0c68] border-b-[#dc0c68] border-l-[#96002c] bg-[#d0d0d0] pl-[2px] font-['DejaVu_Sans_Condensed','Roboto',sans-serif] text-[11px] font-normal text-black">87.8570m</output></label>
          <button class="block h-[22px] w-[89px] rounded-[3px] border border-[#003c74] bg-linear-to-b from-white to-[#d0d0e0] text-[11px] font-bold whitespace-nowrap text-black">Plot Residuals</button>
        </div>
      </div>
      <p class="mt-[2px] pl-[5px] whitespace-pre text-[#dcf8c4]">Shows the results of a linear fit of the voltage  to the
current for the Latest Sweep data. The Slope and
Intercept are of V vs. I, using the calibration settings at
the time the sweep was performed. The Vm vs. Vi values
are for the raw data: measured voltage (Vm) and
current control set voltage (Vi).</p>
    </div>
    <button class="mt-[8px] mr-[5px] h-[21px] w-[96px] self-end rounded-[3px] border border-[#003c74] bg-linear-to-b from-white to-[#d0d0e0] whitespace-nowrap">CLOSE WINDOW</button>
  </div>
</section>
<div role="tooltip" class="absolute top-[512px] left-[794px] h-[15px] w-[317px] border border-black bg-[#ffffe1] whitespace-nowrap">Reduced Chi-Squared of a linear fit to V(I) for the Latest sweep.</div>

<!-- Notification balloon -->
<aside role="status" class="absolute right-[57px] bottom-[17px] h-[124px] w-[326px]">
  <svg class="absolute inset-0 size-full" viewBox="0 0 326 124"><path d="M7 4H320Q326 4 326 10V100Q326 106 320 106H314V124L292 106H8z" fill="#000" opacity=".3"/><path d="M7.500 2.500H316.500Q323.500 2.500 323.500 9.500V97.500Q323.500 104.500 316.500 104.500H308.500V123.500L289.500 104.500H7.500Q.5 104.500.5 97.500V9.500Q.5 2.500 7.500 2.500z" fill="#ffffe1" stroke="#000"/></svg>
  <div class="relative pt-[7px] pr-[8px] pl-[12px]">
    <div class="flex items-start">
      <svg class="mt-px size-[17px]" viewBox="0 0 17 17"><path d="M8 1q7 .5 7 6.500 0 5-4 6l-2 3-2-3Q1 12 1 7.500 1 1.500 8 1z" fill="#eef3fb" stroke="#9db0d0"/><path d="M8.500 3v2M6.500 6.500H9V11M6.500 11.500h4.500" stroke="#1a40b0" stroke-width="1.800" fill="none"/></svg>
      <h2 class="mt-[3px] ml-[7px] font-['Noto_Sans',sans-serif] font-bold">Symantec Endpoint Protection</h2>
      <button aria-label="Close" class="ml-auto size-[16px] rounded-[3px] border border-[#b0ac98] text-[#9a9684]"><svg class="size-full" viewBox="0 0 14 14"><path d="M3.500 3.500l7 7M10.500 3.500l-7 7" stroke="currentColor" stroke-width="1.800"/></svg></button>
    </div>
    <p class="mt-[5px] font-['Roboto',sans-serif] whitespace-nowrap">The client will block traffic from IP address 189.236.61.171 for<br>the next 600 seconds (from 5/10/2018 3:50:17 PM to<br>5/10/2018 4:00:17 PM).</p>
  </div>
</aside>

<script>
const line = (x1, y1, x2, y2, c) => `<path d="M${x1} ${y1}L${x2} ${y2}" stroke="${c}" fill="none"/>`;
const snap = v => Math.floor(v) + 0.5;
const label = (x, y, t, anchor, size) => `<text x="${x}" y="${y}" text-anchor="${anchor}" font-size="${size}">${t}</text>`;
const squares = pts => pts.map(([x, y]) => `<rect x="${x - 1.5}" y="${y - 1.5}" width="4" height="4" fill="none" stroke="#153d00"/>`).join('');
const circles = pts => pts.map(([x, y]) => `<circle cx="${x + .5}" cy="${y + .5}" r="2.200" fill="none" stroke="#a8a8a8"/>`).join('');
const poly = (pts, c) => `<polyline points="${pts.map(([x, y]) => `${x + .5},${y + .5}`).join(' ')}" fill="none" stroke="${c}" stroke-width="1.500"/>`;

const latest = [[81,500],[82,478],[86,456],[89,445],[94,431],[102,420],[113,408],[125,396],[139,385],[155,373],[173,362],[191,351],[209,339],[228,328],[248,316],[267,305],[286,294],[305,282],[324,271]];
const previous = [[286,294],[303,287],[313,278],[326,268],[342,259],[358,250],[373,241],[388,231],[403,222],[417,213],[432,204],[447,195],[462,186],[477,177],[493,167],[508,158],[523,149],[539,140],[554,131],[571,122],[588,113]];
let s = '<rect x="77" y="65" width="553" height="481" fill="#fff"/>';
for (let i = 1; i < 80; i++) if (i % 10) s += line(snap(78 + i * 6.9), 65, snap(78 + i * 6.9), 545, '#e4e4e4');
for (let d = 0; d < 10; d++) for (let k = 2; k < 10; k++) { const y = snap(545 - 47.95 * (d + Math.log10(k))); s += line(78, y, 630, y, '#e4e4e4'); }
for (let i = 1; i < 8; i++) s += line(snap(78 + i * 69), 65, snap(78 + i * 69), 545, '#cacaca');
const amps = ['10p','100p','1n','10n','100n','1u','10u','100u','1m','10m','100m'];
amps.forEach((t, d) => { const y = snap(544.9 - 47.95 * d); if (d && d < 10) s += line(78, y, 630, y, '#cacaca'); s += line(71, y, 76, y, '#000') + label(68, y + 4, t, 'end', 10); });
for (let i = 0; i <= 8; i++) s += line(snap(78 + i * 69), 547, snap(78 + i * 69), 552, '#000') + label(77 + i * 69 - (i > 7 ? 1 : 0), 563, i ? i + '00m' : '0', 'middle', 10);
s += line(77, 64.5, 630, 64.5, '#666') + line(77.5, 64, 77.5, 546, '#666');
s += poly(previous, '#ffdf70') + circles(previous.slice(1)) + poly(latest, '#ff1a10') + squares(latest);
s += line(139.5, 65, 139.5, 545, '#008a1e') + line(78, 385.5, 630, 385.5, '#008a1e');
s += '<text transform="translate(37 307) rotate(-90)" text-anchor="middle" font-size="11" font-weight="700" font-family="Noto Sans">Current (A)</text>';
document.getElementById('plot').innerHTML = s;

let m = '<rect x="385" y="320" width="443" height="383" fill="#fff"/>';
for (let i = 1; i < 44; i++) { const x = snap(385 + i * 10.07); m += line(x, 320, x, 703, i % 4 ? '#e6e6e6' : '#cacaca'); }
for (let i = 1; i < 40; i++) { const y = snap(703 - i * 9.6); m += line(385, y, 828, y, i % 2 ? '#e6e6e6' : '#cacaca'); }
['-100u','0','100u','200u','300u','400u','500u','600u','700u','800u','900u','1m'].forEach((t, i) => { const x = snap(385 + i * 40.25); m += line(x, 705, x, 709, '#000') + label(x, 718, t, 'middle', 9); });
['0','50u','100u'].forEach((t, i) => { const y = snap(703 - i * 19.2); m += line(380, y, 384, y, '#000') + label(378, y + 3, t, 'end', 9); });
m += line(384.5, 320, 384.5, 703, '#666') + line(385, 682.5, 828, 682.5, '#3cb850') + line(429.5, 320, 429.5, 703, '#008a1e');
const mr = [[418,656],[421,661],[429,682],[417,702]], my = [[728,640],[723,661],[716,682],[725,702]];
m += poly(mr, '#ff3030') + squares(mr.slice(1)) + poly(my, '#ffdf70') + circles(my.slice(1));
m += poly([[780,351],[795,343]], '#ffdf70') + poly([[780,369],[795,380]], '#ffdf70') + poly([[780,412],[795,400]], '#ffdf70');
document.getElementById('miniplot').innerHTML = m;
</script>
</body>
</html>
